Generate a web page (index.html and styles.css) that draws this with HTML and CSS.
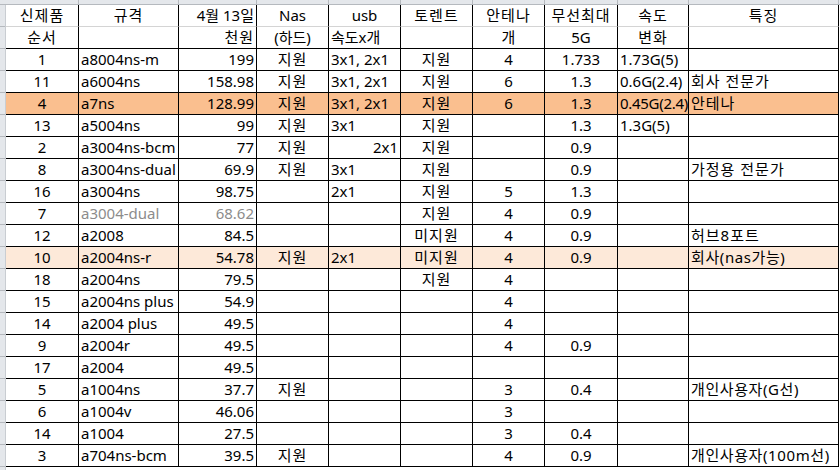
FILE: index.html
```html
<!DOCTYPE html>
<html lang="ko">
<head>
<meta charset="utf-8">
<link rel="stylesheet" href="styles.css">
</head>
<body>
<div class="sheet">
  <div class="corner"></div>
  <div class="colbar">
    <span style="width:73px"></span><span style="width:100px"></span><span style="width:78px"></span><span style="width:72px"></span><span style="width:72px"></span><span style="width:72px"></span><span style="width:72px"></span><span style="width:73px"></span><span style="width:71px"></span><span style="width:150px"></span>
  </div>
  <div class="rowbar"></div>
  <div class="table">
    <div class="row head1">
      <div class="c k">신제품</div><div class="c k">규격</div><div class="r">4월 13일</div><div class="c">Nas</div><div class="c">usb</div><div class="c k">토렌트</div><div class="c k">안테나</div><div class="c k">무선최대</div><div class="c k">속도</div><div class="c k">특징</div>
    </div>
    <div class="row head2">
      <div class="c k">순서</div><div></div><div class="r k">천원</div><div class="c">(하드)</div><div class="l">속도x개</div><div></div><div class="c">개</div><div class="c">5G</div><div class="c k">변화</div><div></div>
    </div>
    <div class="row"><div class="c">1</div><div class="l">a8004ns-m</div><div class="r">199</div><div class="c k">지원</div><div class="l">3x1, 2x1</div><div class="c k">지원</div><div class="c">4</div><div class="c">1.733</div><div class="l">1.73G(5)</div><div></div></div>
    <div class="row"><div class="c">11</div><div class="l">a6004ns</div><div class="r">158.98</div><div class="c k">지원</div><div class="l">3x1, 2x1</div><div class="c k">지원</div><div class="c">6</div><div class="c">1.3</div><div class="l">0.6G(2.4)</div><div class="l k">회사 전문가</div></div>
    <div class="row hot"><div class="c">4</div><div class="l">a7ns</div><div class="r">128.99</div><div class="c k">지원</div><div class="l">3x1, 2x1</div><div class="c k">지원</div><div class="c">6</div><div class="c">1.3</div><div class="l tight">0.45G(2.4)</div><div class="l k">안테나</div></div>
    <div class="row"><div class="c">13</div><div class="l">a5004ns</div><div class="r">99</div><div class="c k">지원</div><div class="l">3x1</div><div class="c k">지원</div><div></div><div class="c">1.3</div><div class="l">1.3G(5)</div><div></div></div>
    <div class="row"><div class="c">2</div><div class="l">a3004ns-bcm</div><div class="r">77</div><div class="c k">지원</div><div class="r">2x1</div><div class="c k">지원</div><div></div><div class="c">0.9</div><div></div><div></div></div>
    <div class="row"><div class="c">8</div><div class="l">a3004ns-dual</div><div class="r">69.9</div><div class="c k">지원</div><div class="l">3x1</div><div class="c k">지원</div><div></div><div class="c">0.9</div><div></div><div class="l k">가정용 전문가</div></div>
    <div class="row"><div class="c">16</div><div class="l">a3004ns</div><div class="r">98.75</div><div></div><div class="l">2x1</div><div class="c k">지원</div><div class="c">5</div><div class="c">1.3</div><div></div><div></div></div>
    <div class="row"><div class="c">7</div><div class="l gray">a3004-dual</div><div class="r gray">68.62</div><div></div><div></div><div class="c k">지원</div><div class="c">4</div><div class="c">0.9</div><div></div><div></div></div>
    <div class="row"><div class="c">12</div><div class="l">a2008</div><div class="r">84.5</div><div></div><div></div><div class="c k">미지원</div><div class="c">4</div><div class="c">0.9</div><div></div><div class="l k">허브8포트</div></div>
    <div class="row warm"><div class="c">10</div><div class="l">a2004ns-r</div><div class="r">54.78</div><div class="c k">지원</div><div class="l">2x1</div><div class="c k">미지원</div><div class="c">4</div><div class="c">0.9</div><div></div><div class="l m">회사(nas가능)</div></div>
    <div class="row"><div class="c">18</div><div class="l">a2004ns</div><div class="r">79.5</div><div></div><div></div><div class="c k shift">지원</div><div class="c">4</div><div></div><div></div><div></div></div>
    <div class="row"><div class="c">15</div><div class="l">a2004ns plus</div><div class="r">54.9</div><div></div><div></div><div></div><div class="c">4</div><div></div><div></div><div></div></div>
    <div class="row"><div class="c">14</div><div class="l">a2004 plus</div><div class="r">49.5</div><div></div><div></div><div></div><div class="c">4</div><div></div><div></div><div></div></div>
    <div class="row"><div class="c">9</div><div class="l">a2004r</div><div class="r">49.5</div><div></div><div></div><div></div><div class="c">4</div><div class="c">0.9</div><div></div><div></div></div>
    <div class="row"><div class="c">17</div><div class="l">a2004</div><div class="r">49.5</div><div></div><div></div><div></div><div></div><div></div><div></div><div></div></div>
    <div class="row"><div class="c">5</div><div class="l">a1004ns</div><div class="r">37.7</div><div class="c k">지원</div><div></div><div></div><div class="c">3</div><div class="c">0.4</div><div></div><div class="l m">개인사용자(G선)</div></div>
    <div class="row"><div class="c">6</div><div class="l">a1004v</div><div class="r">46.06</div><div></div><div></div><div></div><div class="c">3</div><div></div><div></div><div></div></div>
    <div class="row"><div class="c">14</div><div class="l">a1004</div><div class="r">27.5</div><div></div><div></div><div></div><div class="c">3</div><div class="c">0.4</div><div></div><div></div></div>
    <div class="row"><div class="c">3</div><div class="l">a704ns-bcm</div><div class="r">39.5</div><div class="c k">지원</div><div></div><div></div><div class="c">4</div><div class="c">0.9</div><div></div><div class="l m">개인사용자(100m선)</div></div>
  </div>
</div>
</body>
</html>
```

FILE: styles.css
```css
html, body {
  margin: 0;
  padding: 0;
  background: #ffffff;
}

body {
  width: 840px;
  height: 470px;
  overflow: hidden;
  font-family: "Noto Sans", "Noto Sans CJK KR", sans-serif;
  font-size: 15px;
  color: #000000;
}

.sheet {
  display: grid;
  grid-template-columns: 6px 834px;
  grid-template-rows: 5px 465px;
}

.corner {
  background: #e4e7eb;
  border-bottom: 1px solid #b5b9be;
  box-sizing: border-box;
}

.colbar {
  display: flex;
  background: #e4e7eb;
  border-bottom: 1px solid #b5b9be;
  box-sizing: border-box;
}

.colbar span {
  display: block;
  box-sizing: border-box;
  border-right: 1px solid #b5b9be;
}

.rowbar {
  background: #e4e7eb;
  border-right: 1px solid #c9cdd2;
  box-sizing: border-box;
  background-image: repeating-linear-gradient(to bottom, transparent 0, transparent 21px, #b5b9be 21px, #b5b9be 22px);
}

.table {
  display: flex;
  flex-direction: column;
}

.row {
  display: grid;
  grid-template-columns: 73px 100px 78px 72px 72px 72px 72px 73px 71px 150px;
  height: 22px;
}

.row > div {
  box-sizing: border-box;
  border-right: 1px solid #000000;
  border-bottom: 1px solid #000000;
  line-height: 21px;
  padding: 0 2px;
  white-space: nowrap;
  overflow: hidden;
}

.head1 > div {
  border-bottom-color: #d4d4d4;
}

.c { text-align: center; }
.l { text-align: left; }
.r { text-align: right; }

.k { letter-spacing: 1px; }
.m { letter-spacing: 0.6px; }

.tight { letter-spacing: -0.3px; padding-left: 1px; padding-right: 0; }

.gray { color: #8c8c8c; }

.shift { padding-left: 8px; }

.hot > div { background: #fabf8f; }
.warm > div { background: #fde9d9; }
```
